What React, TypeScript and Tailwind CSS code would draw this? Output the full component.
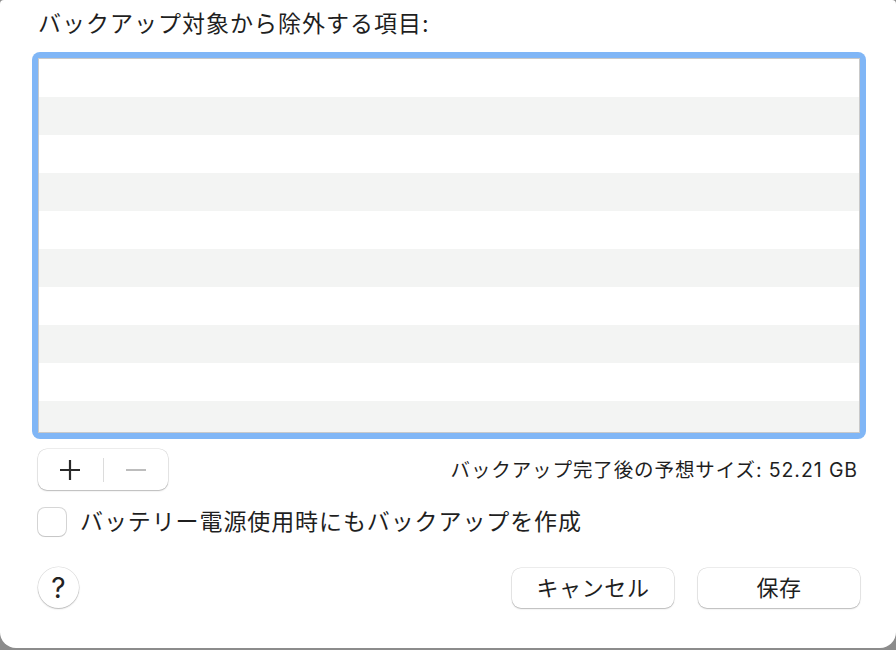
import React from "react";

const font = { fontFamily: '"Inter", "Noto Sans CJK JP", sans-serif' };

const btnShadow =
  "shadow-[0_0_0_0.5px_rgba(0,0,0,0.14),0_1px_1.5px_rgba(0,0,0,0.22)]";

function ExcludeList() {
  const rows = Array.from({ length: 10 });
  return (
    <div className="-ml-[6px] w-[834px] h-[387px] rounded-[8px] bg-[#80b6f6] p-[6px]">
      <div className="h-full w-full border border-[#c9c9c9] bg-white overflow-hidden">
        {rows.map((_, i) => (
          <div
            key={i}
            className={i % 2 === 0 ? "h-[38px] bg-white" : "h-[38px] bg-[#f3f4f3]"}
          />
        ))}
      </div>
    </div>
  );
}

function AddRemove() {
  return (
    <div className={`flex items-center w-[130px] h-[41px] rounded-[9px] bg-white ${btnShadow}`}>
      <div className="flex-1 flex items-center justify-center">
        <svg width="22" height="22" viewBox="0 0 22 22">
          <path d="M11 1v20M1 11h20" stroke="#2a2a2a" strokeWidth="2.2" />
        </svg>
      </div>
      <div className="w-px h-[24px] bg-[#dcdcdc]" />
      <div className="flex-1 flex items-center justify-center">
        <svg width="22" height="22" viewBox="0 0 22 22">
          <path d="M1 11h20" stroke="#bdbdbd" strokeWidth="2" />
        </svg>
      </div>
    </div>
  );
}

export default function App() {
  return (
    <div className="w-[896px] h-[650px] bg-[#8c8c8c]" style={font}>
      <div className="h-[648px] bg-white rounded-b-[16px] rounded-t-[4px] pl-[38px] pr-[36px] pt-[10px] text-[#1f1f1f]">
        <div className="h-[28px] leading-[28px] text-[23px] tracking-[1px]">
          バックアップ対象から除外する項目:
        </div>

        <div className="mt-[14px]">
          <ExcludeList />
        </div>

        <div className="mt-[10px] flex items-center justify-between">
          <AddRemove />
          <div className="mr-[2px] text-[19.5px] leading-[24px] tracking-[0.9px]">
            バックアップ完了後の予想サイズ: 52.21 GB
          </div>
        </div>

        <label className="mt-[18px] flex items-center gap-[14px] h-[28px]">
          <span className="w-[28px] h-[28px] rounded-[7px] bg-white shadow-[0_0_0_1px_rgba(0,0,0,0.16),0_1px_1px_rgba(0,0,0,0.08)]" />
          <span className="text-[23px] leading-[28px] tracking-[0.9px]">
            バッテリー電源使用時にもバックアップを作成
          </span>
        </label>

        <div className="mt-[31px] flex items-center justify-between">
          <button className={`w-[41px] h-[41px] rounded-full bg-white flex items-center justify-center text-[28px] leading-none text-[#222] ${btnShadow}`}>
            ?
          </button>
          <div className="flex gap-[24px]">
            <button className={`w-[162px] h-[40px] rounded-[9px] bg-white text-[22px] leading-none tracking-[0.6px] ${btnShadow}`}>
              キャンセル
            </button>
            <button className={`w-[162px] h-[40px] rounded-[9px] bg-white text-[22px] leading-none tracking-[0.6px] ${btnShadow}`}>
              保存
            </button>
          </div>
        </div>
      </div>
    </div>
  );
}
